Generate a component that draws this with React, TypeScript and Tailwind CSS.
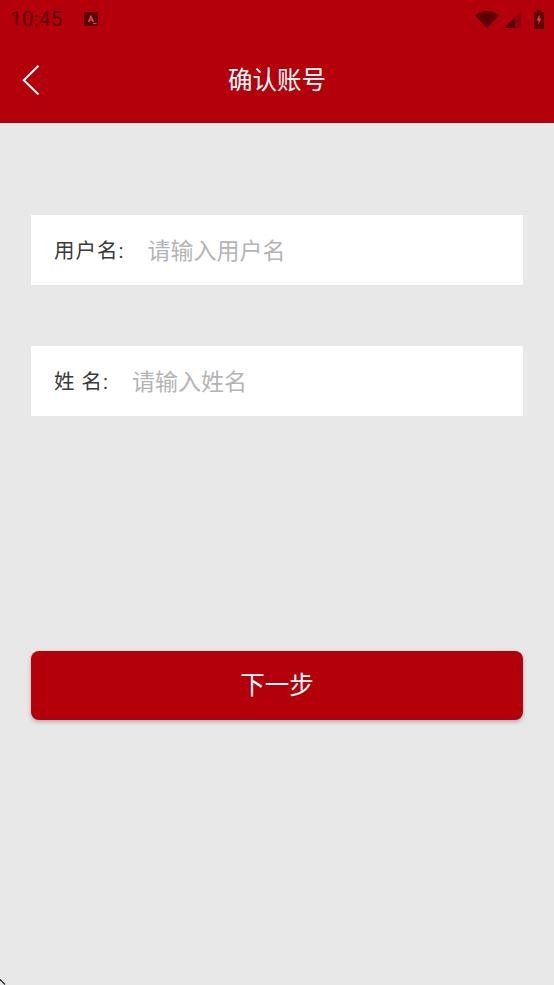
const CJK = "font-['Roboto','Noto_Sans_CJK_SC',sans-serif]";

const StatusBar = () => (
  <div className="flex h-[38px] items-center pl-[10px] pr-[10px] text-[#5e0006]">
    <span className="font-['Roboto',sans-serif] text-[21px] leading-none">10:45</span>
    <svg viewBox="0 0 14 14" className="ml-[22px] h-[14px] w-[14px]">
      <rect width="14" height="14" rx="1" fill="#5e0006" />
      <path d="M7 2.500 3.600 10h1.700l.5-1.300h2.400l.5 1.300h1.700L7 2.500Zm0 3.400.7 1.600H6.300Z" fill="#c9505a" />
      <rect x="9" y="11" width="3.500" height="1" fill="#c9505a" />
    </svg>
    <div className="ml-auto flex items-center">
      <svg viewBox="0 0 24 17" className="h-[17px] w-[24px]">
        <path d="M0 4.500C3 1.800 7.200 0 12 0s9 1.800 12 4.500L12 17 0 4.500Z" fill="#5e0006" />
      </svg>
      <svg viewBox="0 0 17 17" className="ml-[5px] h-[17px] w-[17px]">
        <path d="M17 0v17H0L17 0Z" fill="#8a0610" />
        <path d="M11 6v11H0L11 6Z" fill="#5e0006" />
      </svg>
      <svg viewBox="0 0 10 19" className="ml-[13px] h-[19px] w-[10px]">
        <path d="M3 0h4v2h3v17H0V2h3V0Z" fill="#5e0006" />
        <path d="M5.800 4 2.600 10.500h2l-.5 4.500 3.300-6.500h-2L5.800 4Z" fill="#d8404a" />
      </svg>
    </div>
  </div>
);

const Field = ({ label, placeholder }: { label: string; placeholder: string }) => (
  <div className={`mx-[31px] flex h-[70px] items-center bg-white pl-[23px] ${CJK}`}>
    <span className="shrink-0 pt-[3px] text-[20.500px] leading-none tracking-[1px] whitespace-pre text-[#3a3a3a]">{label}</span>
    <input
      placeholder={placeholder}
      className="ml-[23px] min-w-0 flex-1 bg-transparent pt-[4px] text-[23px] text-[#333333] outline-none placeholder:text-[#b4b4b4]"
    />
  </div>
);

export default function App() {
  return (
    <div className={`relative flex h-[985px] w-[554px] flex-col overflow-hidden bg-[#e8e8e8] ${CJK}`}>
      <header className="h-[123px] bg-[#b3000b]">
        <StatusBar />
        <div className="relative flex h-[85px] items-center justify-center pt-[2px]">
          <svg viewBox="0 0 18 30" className="absolute top-[27px] left-[22px] h-[30px] w-[18px]" fill="none">
            <path d="M16.500 0.800 1.800 15.300 16.500 29.500" stroke="#ffffff" strokeWidth="2" />
          </svg>
          <h1 className="text-[24.500px] leading-none font-normal text-white">确认账号</h1>
        </div>
      </header>

      <main className="flex flex-1 flex-col pt-[92px]">
        <Field label="用户名:" placeholder="请输入用户名" />
        <div className="h-[61px]" />
        <Field label="姓 名:" placeholder="请输入姓名" />
        <button className="mx-[31px] mt-[235px] h-[69px] rounded-[8px] bg-[#b3000b] pt-[2px] text-[24.500px] text-white shadow-[0_2px_4px_rgba(0,0,0,0.25)]">
          下一步
        </button>
      </main>

      {/* Rounded screen corner artefact */}
      <svg viewBox="0 0 6 6" className="absolute bottom-0 left-0 h-[6px] w-[6px]">
        <path d="M0 0.500 5 5.500" stroke="#222222" strokeWidth="1.200" />
      </svg>
    </div>
  );
}
